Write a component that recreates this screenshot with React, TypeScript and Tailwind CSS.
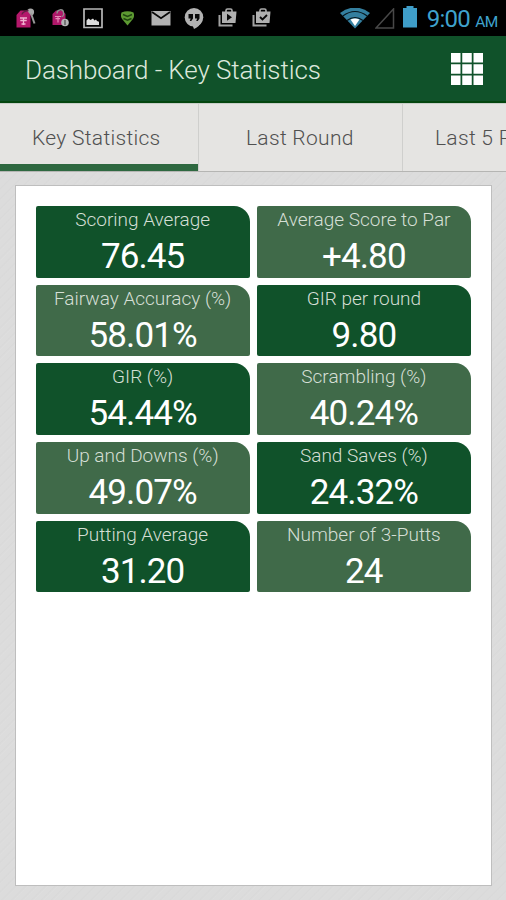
import type { ReactNode } from "react";

type Stat = { label: string; value: string };

const stats: Stat[] = [
  { label: "Scoring Average", value: "76.45" },
  { label: "Average Score to Par", value: "+4.80" },
  { label: "Fairway Accuracy (%)", value: "58.01%" },
  { label: "GIR per round", value: "9.80" },
  { label: "GIR (%)", value: "54.44%" },
  { label: "Scrambling (%)", value: "40.24%" },
  { label: "Up and Downs (%)", value: "49.07%" },
  { label: "Sand Saves (%)", value: "24.32%" },
  { label: "Putting Average", value: "31.20" },
  { label: "Number of 3-Putts", value: "24" },
];

function Slot({ className, children }: { className: string; children: ReactNode }) {
  return <div className={`shrink-0 ${className}`}>{children}</div>;
}

function TagIcon({ badge }: { badge?: boolean }) {
  return (
    <svg width="20" height="20" viewBox="0 0 20 20" className="block">
      {badge ? (
        <>
          <path d="M1.500 6 5 2.500h6.500l3 3.500v11H1.500Z" fill="#b0186a" />
          <path d="M6 5.500C6 1 12 .5 12.500 4.500s-.5 3.500-2 4" fill="none" stroke="#8f8f8f" strokeWidth="1.300" />
          <path d="M4 8.500h6M4.500 10.700h4.500M7 8.500v6" stroke="#e58bb7" strokeWidth="1.200" />
          <circle cx="14" cy="14.500" r="3.800" fill="#b5b5b5" />
          <path d="M14 12v5" stroke="#555" strokeWidth="1.300" />
        </>
      ) : (
        <>
          <circle cx="14.500" cy="4" r="3.600" fill="#aaa" />
          <path d="m15 5.500 3.500 10" stroke="#999" strokeWidth="2" />
          <path d="M.5 7 4.500 2.500h6.500l3.500 4.500v12.500H.5Z" fill="#b5186b" />
          <path d="M6 6.500c.5-3 3.500-3.500 6.500-4" fill="none" stroke="#612044" strokeWidth="1.400" />
          <path d="M4 10h7M4.300 12.500h6.400M7.500 10v7M5.500 16h4" stroke="#f0b2d0" strokeWidth="1.300" />
        </>
      )}
    </svg>
  );
}

function StoreIcon({ check }: { check?: boolean }) {
  return (
    <svg width="20" height="20" viewBox="0 0 20 20" className="block">
      <path d="M1.500 7v10.500h13" fill="none" stroke="#a2a2a2" strokeWidth="2" />
      <path d="M8 4V2.500Q8 1 9.500 1h3Q14 1 14 2.500V4" fill="none" stroke="#acacac" strokeWidth="1.600" />
      <path d="M4 3.500h14.500L17.500 15H4Z" fill="#b0b0b0" />
      {check ? (
        <path d="m8 9 2.500 2.500L15 7" fill="none" stroke="#080808" strokeWidth="1.800" />
      ) : (
        <path d="m9 5.800 5 3.500-5 3.500Z" fill="#080808" />
      )}
    </svg>
  );
}

function StatusBar() {
  return (
    <div className="flex h-9 items-start bg-black pt-2">
      <Slot className="ml-4"><TagIcon /></Slot>
      <Slot className="ml-[15px]"><TagIcon badge /></Slot>
      <Slot className="ml-[12px]">
        <svg width="20" height="21" viewBox="0 0 20 21" className="block">
          <path d="M1 1h18v18.500H1Z" fill="none" stroke="#b8b8b8" strokeWidth="1.700" />
          <path d="M3.500 17v-4.500l2-2 2 1.500 2.500-1.500 1.500 2 1.500-1 1 1.500 2 .8V17Z" fill="#ddd" />
        </svg>
      </Slot>
      <Slot className="ml-[17px] pt-0.5">
        <svg width="15" height="17" viewBox="0 0 15 17" className="block">
          <path d="M1.500 2.500Q7.500 0 13.500 2.500q1.500 4-1 7L7.500 15.500l-5-6Q0 6.500 1.500 2.500Z" fill="#5d9a32" />
          <path d="M3 4.500 7.500 6.500 12 4.500M3.500 8.500 7.500 10.200l4-1.700" fill="none" stroke="#204510" strokeWidth="1.400" />
        </svg>
      </Slot>
      <Slot className="ml-[16px] pt-[3px]">
        <svg width="20" height="15" viewBox="0 0 20 15" className="block">
          <path d="M.5 0h19v14.500H.5Z" fill="#b2b2b2" />
          <path d="m1 1 9 6.200L19 1" fill="none" stroke="#080808" strokeWidth="1.800" />
        </svg>
      </Slot>
      <Slot className="ml-[12px]">
        <svg width="22" height="22" viewBox="0 0 22 22" className="block">
          <path d="M9 16h4.500l5-2Q16 19 11 21Z" fill="#b2b2b2" />
          <circle cx="11" cy="9.300" r="9.300" fill="#b2b2b2" />
          <path d="M5.500 6h4.500v4.500L8.300 13H6.700l1-2.500H5.500ZM12 6h4.500v4.500L14.800 13h-1.600l1-2.500H12Z" fill="#080808" />
        </svg>
      </Slot>
      <Slot className="ml-[13px]"><StoreIcon /></Slot>
      <Slot className="ml-[14px]"><StoreIcon check /></Slot>
      <div className="ml-auto flex pr-2">
        <svg width="30" height="22" viewBox="0 0 30 22" className="block">
          <path d="M0 5Q15-6 30 5L15 20.500Z" fill="#347f9f" />
          <path d="M2.800 8Q15-1 27.200 8M7 12.500Q15 6.500 23 12.500" fill="none" stroke="#07151b" strokeWidth="1.200" />
          <path d="M10.500 11.500Q15 9.500 19.500 11.500L15 18Z" fill="#fff" />
        </svg>
        <svg width="20" height="22" viewBox="0 0 20 22" className="ml-[5px] block">
          <path d="M18.500 1v19H1Z" fill="none" stroke="#484848" strokeWidth="1.500" />
        </svg>
        <svg width="14" height="22" viewBox="0 0 14 22" className="ml-[8px] mt-[-2px] block">
          <path d="M3.500 0h7v2H14v19.500H0V2h3.500Z" fill="#3f9ec9" />
        </svg>
        <div className="ml-[10px] mt-[-3px] flex items-baseline whitespace-nowrap text-[#3fa3cd]">
          <span className="text-[24px] leading-7 tracking-[-0.7px]">9:00</span>
          <span className="ml-[5px] text-[15.5px] leading-7 tracking-[-0.4px]">AM</span>
        </div>
      </div>
    </div>
  );
}

function Header() {
  return (
    <header className="flex h-[67px] items-center justify-between border-b-2 border-[#04460f] bg-[#10522a] pl-[25px] pr-[23px]">
      <h1 className="whitespace-nowrap pt-[3px] text-[26px] font-light leading-8 tracking-[-0.1px] text-[#dce8dc]">Dashboard - Key Statistics</h1>
      <svg width="32" height="32" viewBox="0 0 32 32">
        {[0, 11.25, 22.5].map((y) =>
          [0, 11.25, 22.5].map((x) => <rect key={`${x}-${y}`} x={x} y={y} width="9.500" height="9.500" fill="#fff" />),
        )}
      </svg>
    </header>
  );
}

function Tabs() {
  return (
    <nav className="flex h-[69px] overflow-hidden whitespace-nowrap border-b border-b-[#b5b5b3] border-t border-t-[#c8cec8] bg-[#e5e4e2] text-[21px] font-light leading-[69px] tracking-[0.3px] text-[#505050]">
      <div className="w-[198px] shrink-0 border-b-[7px] border-[#2e6840] pl-8"><span>Key Statistics</span></div>
      <div className="w-[205px] shrink-0 border-x border-[#cfcfcd] pl-[47px]"><span>Last Round</span></div>
      <div className="shrink-0 pl-8"><span>Last 5 Rounds</span></div>
    </nav>
  );
}

function Tile({ stat, dark }: { stat: Stat; dark: boolean }) {
  return (
    <div className={`flex h-[71.5px] flex-col items-center whitespace-nowrap rounded-[2px] rounded-tr-[16px] ${dark ? "bg-[#10522a]" : "bg-[#406a49]"}`}>
      <div className="mt-[2px] text-[19px] font-light leading-6 text-[#d5dfd5]"><span>{stat.label}</span></div>
      <div className="mt-[5px] text-[35px] leading-10 tracking-[-0.9px] text-white"><span>{stat.value}</span></div>
    </div>
  );
}

export default function App() {
  return (
    <div className="flex h-[900px] w-[506px] flex-col overflow-hidden bg-[#dcdcdc] font-['Roboto',sans-serif]">
      <StatusBar />
      <Header />
      <Tabs />
      <main className="flex-1 bg-[repeating-linear-gradient(135deg,#dcdcdc_0px,#dcdcdc_4px,#d9d9d9_5px,#dedede_7px)] pb-[14px] pl-[15px] pr-[14px] pt-[13px]">
        <div className="h-full border border-[#bebebe] bg-white pl-[19.5px] pr-5 pt-5">
          <div className="grid grid-cols-2 gap-x-[7px] gap-y-[7.2px]">
            {stats.map((stat, i) => (
              <Tile key={stat.label} stat={stat} dark={i % 4 === 0 || i % 4 === 3} />
            ))}
          </div>
        </div>
      </main>
    </div>
  );
}
